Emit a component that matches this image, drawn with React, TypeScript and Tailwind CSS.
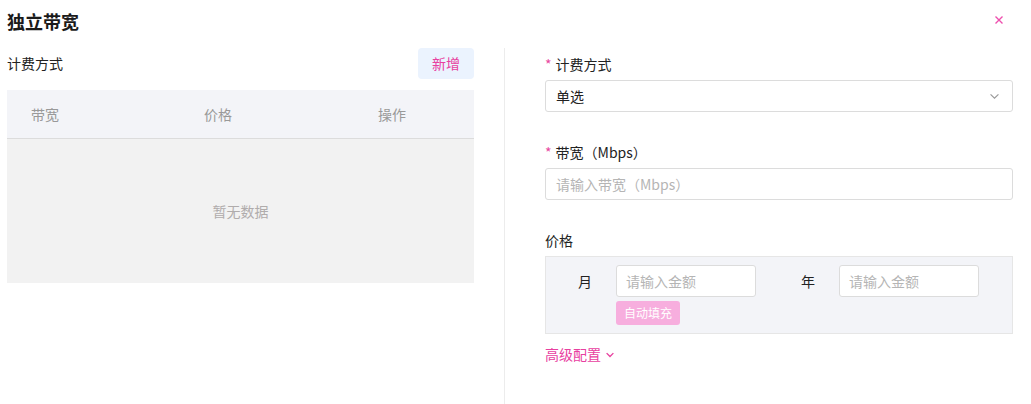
const FONT = { fontFamily: '"Noto Sans CJK SC", "Noto Sans", sans-serif' };

function Chevron({ className, width = 1.3 }: { className?: string; width?: number }) {
  return (
    <svg viewBox="0 0 12 8" className={className} fill="none" stroke="currentColor" strokeWidth={width}>
      <path d="M1.5 1.5 6 6l4.5-4.5" />
    </svg>
  );
}

function Label({ children, required }: { children: React.ReactNode; required?: boolean }) {
  return (
    <div className="flex h-8 items-center text-[14px] text-[#222]">
      {required ? <span className="mr-1 text-[#e8489f]">*</span> : null}
      {children}
    </div>
  );
}

export default function App() {
  return (
    <div className="h-[404px] w-[1031px] overflow-hidden bg-white" style={FONT}>
      <div className="flex h-12 items-start justify-between pl-[7px] pr-[28px] pt-[8px]">
        <h1 className="text-[18px] font-bold leading-[26px] text-[#1a1a1a]">独立带宽</h1>
        <button className="mt-[8px] text-[#ee4fae]" aria-label="close">
          <svg viewBox="0 0 8 8" className="h-2 w-2" stroke="currentColor" strokeWidth="1.4">
            <path d="M0.5 0.5l7 7M7.5 0.5l-7 7" />
          </svg>
        </button>
      </div>

      <div className="flex">
        <section className="ml-[7px] w-[467px]">
          <div className="flex h-[31px] items-center justify-between">
            <span className="text-[14px] text-[#222]">计费方式</span>
            <button className="h-[31px] w-[56px] rounded-[4px] bg-[#ebf3fe] text-[14px] text-[#e8409f]">新增</button>
          </div>
          <div className="mt-[11px]">
            <div className="grid h-[49px] grid-cols-[173px_174px_120px] items-center border-b border-[#dcdcdc] bg-[#f3f4f8] text-[14px] text-[#999]">
              <span className="pl-6">带宽</span>
              <span className="pl-6">价格</span>
              <span className="pl-6">操作</span>
            </div>
            <div className="flex h-[144px] items-center justify-center bg-[#f2f2f2] text-[14px] text-[#b0acac]">
              暂无数据
            </div>
          </div>
        </section>

        <div className="ml-[30px] h-[356px] border-l border-[#ececec]" />

        <section className="ml-[40px] w-[468px]">
          <Label required>计费方式</Label>
          <div className="flex h-8 items-center justify-between rounded-[3px] border border-[#dcdcdc] pl-[10px] pr-[12px] text-[14px] text-[#222]">
            <span>单选</span>
            <Chevron className="h-[7px] w-[11px] text-[#999]" />
          </div>

          <div className="mt-6">
            <Label required>带宽（Mbps）</Label>
            <div className="flex h-8 items-center rounded-[3px] border border-[#dcdcdc] pl-[10px] text-[14px] text-[#b5b5b5]">
              请输入带宽（Mbps）
            </div>
          </div>

          <div className="mt-6">
            <Label>价格</Label>
            <div className="border border-[#e6e6e6] bg-[#f3f4f8] pb-[8px] pt-[8px]">
              <div className="flex items-center">
                <span className="w-[70px] pr-6 text-right text-[14px] text-[#222]">月</span>
                <div className="flex h-8 w-[140px] items-center rounded-[3px] border border-[#dcdcdc] bg-white pl-[9px] text-[14px] text-[#b5b5b5]">
                  请输入金额
                </div>
                <span className="w-[83px] pr-6 text-right text-[14px] text-[#222]">年</span>
                <div className="flex h-8 w-[140px] items-center rounded-[3px] border border-[#dcdcdc] bg-white pl-[9px] text-[14px] text-[#b5b5b5]">
                  请输入金额
                </div>
              </div>
              <button className="ml-[70px] mt-[4px] h-6 rounded-[3px] bg-[#f7aede] px-2 text-[12px] text-white">自动填充</button>
            </div>
          </div>

          <button className="mt-[10px] flex items-center gap-1 text-[14px] text-[#e8409f]">
            高级配置
            <Chevron className="h-[6px] w-[10px]" width={1.8} />
          </button>
        </section>
      </div>
    </div>
  );
}
